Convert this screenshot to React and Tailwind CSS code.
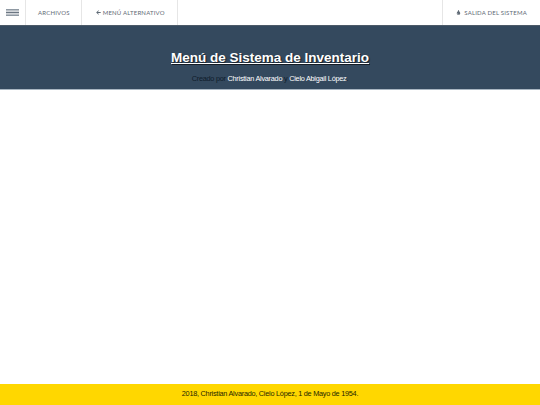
import { FaArrowLeft, FaTint } from 'react-icons/fa';

const navText = "text-[6px] tracking-[0.2px] uppercase text-[#5f6a75] font-['Lato',sans-serif]";

function NavItem({ children, className }) {
  return (
    <a className={`flex h-full items-center border-[#e6e6e6] ${navText} ${className}`}>
      {children}
    </a>
  );
}

export default function App() {
  return (
    <div className="flex h-screen flex-col bg-white font-['Liberation_Sans',Arial,sans-serif]">
      {/* Top navigation */}
      <nav className="flex h-[25px] items-center bg-white">
        <div className="flex h-full w-[26px] items-center justify-center border-r border-[#e6e6e6] pr-[1px]">
          <svg width="13" height="7" viewBox="0 0 13 7">
            <rect y="0" width="13" height="1.6" fill="#8f99a3" />
            <rect y="2.7" width="13" height="1.6" fill="#6b7682" />
            <rect y="5.4" width="13" height="1.6" fill="#8f99a3" />
          </svg>
        </div>
        <NavItem className="border-r pr-[11px] pl-[12px]">Archivos</NavItem>
        <NavItem className="gap-[2px] border-r pr-[12px] pl-[14px]">
          <FaArrowLeft className="text-[5px]" />
          Menú Alternativo
        </NavItem>
        <NavItem className="ml-auto gap-[3px] border-l pr-[13px] pl-[13px]">
          <FaTint className="text-[5px]" />
          Salida del Sistema
        </NavItem>
      </nav>

      {/* Banner */}
      <header className="flex h-[65px] flex-col items-center border-y border-t-[#4c5a68] border-b-[#a9b6c2] bg-[#34495e]">
        <h1 className="mt-[22px] text-[13.5px] leading-[20px] font-bold text-white underline [text-shadow:1px_1px_1px_rgba(0,0,0,0.6)]">
          Menú de Sistema de Inventario
        </h1>
        <p className="mt-[5px] text-[7.3px] leading-[12px] tracking-[-0.25px] text-[#0f1c2b]">
          Creado por <span className="text-white">Christian Alvarado</span> y{' '}
          <span className="text-white">Cielo Abigail López</span>.
        </p>
      </header>

      <main className="flex-1 bg-white" />

      {/* Footer */}
      <footer className="flex h-[21px] items-center justify-center bg-[#ffd700] text-[7.3px] tracking-[-0.25px] text-[#262600]">
        2018, Christian Alvarado, Cielo López, 1 de Mayo de 1954.
      </footer>
    </div>
  );
}
